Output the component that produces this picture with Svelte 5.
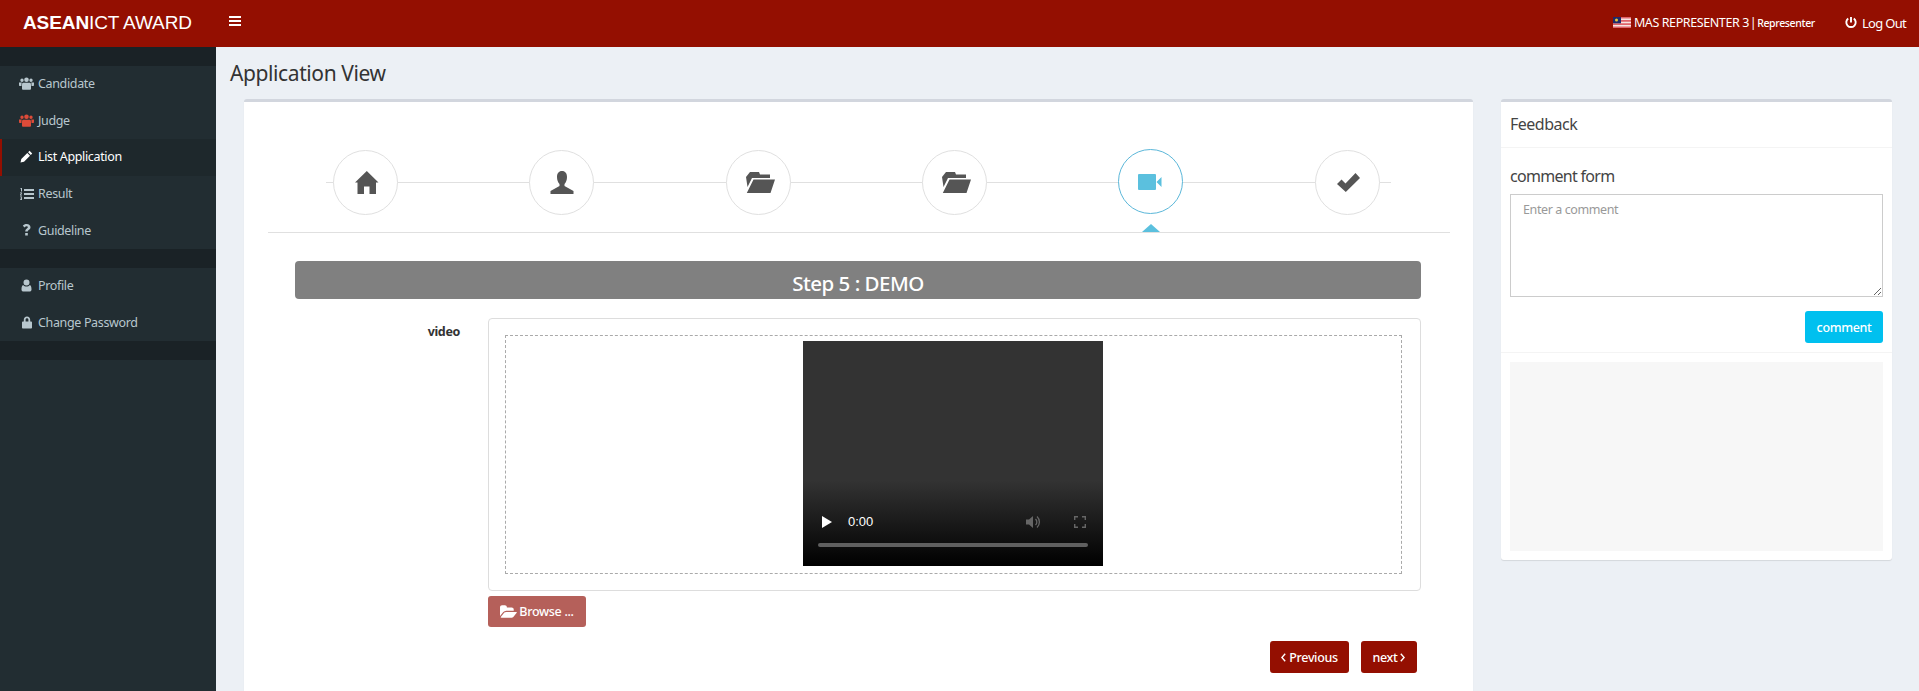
<script>
  const nav1 = [
    { label: 'Candidate', icon: 'users', color: '#b8c7ce' },
    { label: 'Judge', icon: 'users', color: '#dd4b39' },
    { label: 'List Application', icon: 'pencil', color: '#fff', active: true },
    { label: 'Result', icon: 'list', color: '#b8c7ce' },
    { label: 'Guideline', icon: 'question', color: '#b8c7ce' }
  ];
  const nav2 = [
    { label: 'Profile', icon: 'user', color: '#b8c7ce' },
    { label: 'Change Password', icon: 'lock', color: '#b8c7ce' }
  ];
  const folder = 'M2 2.500 4 0h9l1 2.500h10V6H6L1.500 15 0 5zM7.500 7.500H29L24.500 21H.8z';
  const steps = [
    { id: 'home', d: 'M11.800 0 23.500 11.500H21V23h-6.500v-7.500H9V23H2.500V11.500H0z', x: -2, w: 26, h: 23 },
    { id: 'person', d: 'M12 0c3.300 0 5 2.500 5 6 0 3-1 5.500-2.500 7v2l9 5v3H.5v-3l9-5v-2C8 11.500 7 9 7 6c0-3.500 1.700-6 5-6z', x: 0, w: 24, h: 23 },
    { id: 'open', d: folder, x: -4, w: 33, h: 21 },
    { id: 'open2', d: folder, x: -4, w: 33, h: 21 },
    { id: 'video', d: 'M1 0h16a1 1 0 0 1 1 1v14a1 1 0 0 1-1 1H1a1 1 0 0 1-1-1V1a1 1 0 0 1 1-1zM18.500 8l5-5v10z', x: 0, w: 24, h: 16, active: true },
    { id: 'check', d: 'M0 11l4.500-4.500 4 4L18.500 0 23 5 8.800 19z', x: -2, w: 25, h: 19 }
  ];
</script>

{#snippet sideIcon(name)}
  {#if name === 'users'}
    <svg class="sicon" viewBox="0 0 15 13" width="15" height="13" aria-hidden="true"><path d="M3 1.500a1.700 1.700 0 1 1 0 3.400 1.700 1.700 0 0 1 0-3.400zM12 1.500a1.700 1.700 0 1 1 0 3.400 1.700 1.700 0 0 1 0-3.400zM7.500.5a2.300 2.300 0 1 1 0 4.600 2.300 2.300 0 0 1 0-4.600zM0 5.500h2.800c-.3 1-.3 2-.3 3.500H.5C0 9 0 8 0 5.500zM15 5.500h-2.800c.3 1 .3 2 .3 3.500h2c.5 0 .5-1 .5-3.500zM4 5.800h7c.8 0 1 1 1 3v3c0 .500-.5 1-1 1H4c-.5 0-1-.5-1-1v-3c0-2 .2-3 1-3z"/></svg>
  {:else if name === 'pencil'}
    <svg class="sicon" viewBox="0 0 13 13" width="13" height="13" aria-hidden="true"><path d="M9.500.8l2.700 2.700-1.400 1.400L8.100 2.200zM7.300 3l2.700 2.700-6 6L.5 12.500l.8-3.500z"/></svg>
  {:else if name === 'list'}
    <svg class="sicon" viewBox="0 0 14 12" width="14" height="12" aria-hidden="true"><path d="M4 1h10v2H4zM4 5h10v2H4zM4 9h10v2H4zM.5 0h1.500v3.500H1V1H.5zM0 4.500h2v.8L1 6.800h1v.7H0v-.7l1.200-1.600H0zM0 8.500h2v3.500H0v-.7h1.200v-.7H.5v-.6h.7v-.8H0z"/></svg>
  {:else if name === 'question'}
    <svg class="sicon" viewBox="0 0 9 13" width="9" height="13" aria-hidden="true"><path d="M4.700 0C7 0 8.500 1.300 8.500 3.300c0 1.500-.9 2.200-1.800 2.800-.7.500-1 .8-1 1.500H3.200c0-1.500.5-2.200 1.400-2.900.7-.5 1.200-.8 1.200-1.400 0-.6-.5-1-1.200-1-.8 0-1.400.4-2 1.200L.8 1.800C1.700.6 3 0 4.700 0zM3.200 9h2.600v2.500H3.200z"/></svg>
  {:else if name === 'user'}
    <svg class="sicon" viewBox="0 0 11 13" width="11" height="13" aria-hidden="true"><path d="M5.500.5a3 3 0 1 1 0 6 3 3 0 0 1 0-6zM2.200 6c.8 1 2 1.500 3.300 1.500S8 7 8.800 6C10 6.200 10.500 8 10.500 10.500c0 1.400-.9 2-2 2h-6c-1.100 0-2-.6-2-2C.5 8 1 6.200 2.200 6z"/></svg>
  {:else}
    <svg class="sicon" viewBox="0 0 10 13" width="10" height="13" aria-hidden="true"><path d="M5 .5c2 0 3.200 1.400 3.200 3.200V5.500h.8c.5 0 1 .4 1 1v5c0 .6-.5 1-1 1H1c-.5 0-1-.4-1-1v-5c0-.6.5-1 1-1h.8V3.700C1.800 1.900 3 .5 5 .5zm0 1.800c-.8 0-1.400.6-1.400 1.400v1.800h2.800V3.700c0-.8-.6-1.400-1.400-1.400z"/></svg>
  {/if}
{/snippet}

<div class="page">
  <header class="topbar">
    <div class="brand"><b>ASEAN</b>ICT AWARD</div>
    <button class="burger" aria-label="Toggle navigation"><span></span><span></span><span></span></button>
    <div class="topright">
      <svg class="flag" viewBox="0 0 18 11" width="18" height="11" aria-hidden="true">
        <rect width="18" height="11" fill="#f6e4e2"/>
        <path d="M0 0h18v1.600H0zM0 3.100h18v1.600H0zM0 6.300h18v1.600H0zM0 9.400h18V11H0z" fill="#e0636a"/>
        <rect width="8" height="6.300" fill="#1f2a6b"/>
        <circle cx="3.500" cy="3.100" r="1.500" fill="#e9c93a"/>
      </svg>
      <span class="uname">MAS REPRESENTER 3 <span class="sep">|</span> <small>Representer</small></span>
      <span class="logout">
        <svg viewBox="0 0 12 13" width="12" height="13" aria-hidden="true"><path d="M6 6.500V1M3.200 2.600a4.700 4.700 0 1 0 5.600 0" fill="none" stroke="#fff" stroke-width="1.900"/></svg>
        Log Out
      </span>
    </div>
  </header>
  <div class="body">
    <aside class="sidebar">
      <div class="band"></div>
      <ul>
        {#each nav1 as n}
          <li class:active={n.active}>
            <span class="ic" style="fill:{n.color}">{@render sideIcon(n.icon)}</span>{n.label}
          </li>
        {/each}
      </ul>
      <div class="band"></div>
      <ul>
        {#each nav2 as n}
          <li><span class="ic" style="fill:{n.color}">{@render sideIcon(n.icon)}</span>{n.label}</li>
        {/each}
      </ul>
      <div class="band"></div>
    </aside>
    <main class="main">
      <h1>Application View</h1>
      <div class="columns">
        <section class="box wizard">
          <div class="steps">
            <div class="stepline"></div>
            {#each steps as s}
              <div class="step" class:on={s.active}>
                <svg viewBox="{s.x} 0 {s.w} {s.h}" width={s.w} height={s.h} aria-hidden="true"><path d={s.d} /></svg>
              </div>
            {/each}
          </div>
          <div class="rule"><i></i></div>
          <div class="formwrap">
            <div class="stephead">Step 5 : DEMO</div>
            <div class="fieldrow">
              <div class="fieldlabel">video</div>
              <div class="fieldcol">
                <div class="preview">
                  <div class="dash">
                    <div class="player">
                      <div class="controls">
                        <svg class="play" viewBox="0 0 10 12" width="10" height="12" aria-hidden="true"><path d="M0 0l10 6-10 6z" fill="#fff"/></svg>
                        <span class="time">0:00</span>
                        <svg class="vol" viewBox="0 0 16 14" width="16" height="14" aria-hidden="true"><path d="M0 4.500h3L7 1v12L3 9.500H0z" fill="#666"/><path d="M9.500 4a4 4 0 0 1 0 6M11 1.500a7.500 7.500 0 0 1 0 11" fill="none" stroke="#666" stroke-width="1.300"/></svg>
                        <svg class="full" viewBox="0 0 12 12" width="12" height="12" aria-hidden="true"><path d="M.7 4V.7H4M8 .7h3.300V4M11.300 8v3.300H8M4 11.300H.7V8" fill="none" stroke="#666" stroke-width="1.400"/></svg>
                      </div>
                      <div class="track"></div>
                    </div>
                  </div>
                </div>
                <div class="browse">
                  <svg viewBox="0 0 1900 1792" width="17" height="16" aria-hidden="true"><path fill="#fff" d="M1879 952q0 31-31 66l-336 396q-43 51-120.500 86.500t-143.500 35.500h-1088q-34 0-60.500-13t-26.500-43q0-31 31-66l336-396q43-51 120.500-86.500t143.500-35.500h1088q34 0 60.500 13t26.500 43zm-343-344v160h-832q-94 0-197 47.500t-164 119.500l-337 396-5 6q0-4-.5-12.500t-.5-12.500v-960q0-92 66-158t158-66h320q92 0 158 66t66 158v32h544q92 0 158 66t66 158z"/></svg>
                  Browse ...
                </div>
              </div>
            </div>
            <div class="pager">
              <span class="btn prev">
                <svg viewBox="0 0 5 9" width="5" height="9" aria-hidden="true"><path d="M4.200.8.9 4.500l3.300 3.700" fill="none" stroke="#fff" stroke-width="1.400"/></svg>
                Previous
              </span>
              <span class="btn next">
                next
                <svg viewBox="0 0 5 9" width="5" height="9" aria-hidden="true"><path d="M.8.8l3.300 3.700L.8 8.200" fill="none" stroke="#fff" stroke-width="1.400"/></svg>
              </span>
            </div>
          </div>
        </section>
        <section class="box feedback">
          <div class="fbhead">Feedback</div>
          <div class="fbform">
            <div class="fbtitle">comment form</div>
            <textarea placeholder="Enter a comment"></textarea>
            <div class="fbactions"><span class="cbtn">comment</span></div>
          </div>
          <div class="fbfoot"><div class="well"></div></div>
        </section>
      </div>
    </main>
  </div>
</div>

<style>
  :global(body) { margin: 0; overflow: hidden; }
  .page { width: 1919px; height: 691px; overflow: hidden; font-family: "Noto Sans", "Open Sans", sans-serif; font-size: 13px; color: #333; background: #ecf0f5; }
  .topbar { height: 47px; background: #940f01; color: #fff; display: flex; align-items: center; }
  .brand { width: 191px; padding: 0 0 2px 23px; font: 19px "Liberation Sans", sans-serif; letter-spacing: -.1px; white-space: nowrap; }
  .brand b { font-weight: 700; }
  .burger { margin-left: 15px; width: 12px; height: 10px; padding: 0; border: 0; background: none; display: flex; flex-direction: column; justify-content: space-between; margin-bottom: 6px; }
  .burger span { display: block; height: 2px; background: #fff; }
  .topright { margin-left: auto; display: flex; align-items: center; padding: 0 13px 2px 0; }
  .flag { margin-right: 3px; }
  .uname { font-size: 12.500px; letter-spacing: -.4px; white-space: nowrap; }
  .sep { margin: 0 -2px; }
  .uname small { font-size: 10.500px; letter-spacing: -.35px; font-weight: 500; }
  .logout { margin-left: 30px; display: flex; align-items: center; gap: 5px; font-size: 13px; letter-spacing: -.7px; white-space: nowrap; }
  .body { display: flex; height: 644px; }
  .sidebar { width: 216px; flex: none; background: #222d32; }
  .band { height: 19px; background: #1a2226; }
  ul { list-style: none; margin: 0; padding: 0; }
  li { height: 36.600px; display: flex; align-items: center; padding: 0 0 1px 15px; color: #b8c7ce; font-size: 12.500px; letter-spacing: -.35px; box-sizing: border-box; }
  li.active { background: #1e282c; color: #fff; border-left: 2px solid #940f01; padding-left: 13px; }
  .ic { width: 23px; display: flex; justify-content: center; flex: none; }
  .sicon { display: block; }
  .main { flex: 1; min-width: 0; padding-left: 14px; }
  h1 { margin: 0; font-size: 21px; font-weight: 400; letter-spacing: -.4px; height: 52px; line-height: 52px; color: #333; }
  .columns { display: flex; align-items: flex-start; margin-left: 14px; gap: 28px; }
  .box { background: #fff; border-top: 3px solid #d2d6de; border-radius: 3px; box-shadow: 0 1px 1px rgba(0,0,0,.1); box-sizing: border-box; }
  .wizard { width: 1229px; height: 600px; padding: 0 24px; flex: none; }
  .steps { position: relative; display: flex; justify-content: space-between; padding: 48px 0 17px 65px; width: 1047px; height: 65px; }
  .stepline { position: absolute; left: 58px; width: 1065px; top: 80px; height: 1px; background: #e0e0e0; }
  .step { position: relative; width: 63px; height: 63px; border-radius: 50%; border: 1px solid #e0e0e0; background: #fff; display: flex; align-items: center; justify-content: center; fill: #555; }
  .step.on { border-color: #5bb7d9; fill: #5bc0de; transform: translate(-1px, -1px); }
  .rule { position: relative; height: 1px; background: #e0e0e0; width: 1182px; }
  .rule i { position: absolute; left: 874px; top: -8px; border: 9.500px solid transparent; border-top: 0; border-bottom: 8px solid #5bc0de; }
  .formwrap { padding: 28px 27px 0; width: 1126px; }
  .stephead { height: 38px; background: gray; color: #fff; text-align: center; font-size: 20.500px; font-weight: 500; line-height: 45px; border-radius: 4px; letter-spacing: -.5px; }
  .fieldrow { display: flex; margin-top: 19px; }
  .fieldlabel { width: 165px; padding: 5px 28px 0 0; text-align: right; font-weight: 700; font-size: 12.500px; letter-spacing: -.35px; }
  .fieldcol { width: 933px; flex: none; }
  .preview { border: 1px solid #ddd; border-radius: 4px; height: 273px; box-sizing: border-box; padding: 16px 18px 16px 16px; }
  .dash { border: 1px dashed #aaa; height: 239px; display: flex; justify-content: center; padding-top: 5px; box-sizing: border-box; }
  .player { width: 300px; height: 225px; margin-right: 1px; background: linear-gradient(#333 0, #333 62%, #000 100%); position: relative; }
  .controls { position: absolute; left: 19px; right: 17px; top: 173px; display: flex; align-items: center; color: #fff; }
  .time { margin-left: 16px; font: 13px "Liberation Sans", sans-serif; }
  .vol { margin-left: auto; margin-right: 32px; }
  .track { position: absolute; left: 15px; right: 15px; top: 202px; height: 4px; border-radius: 2px; background: #5f5f5f; }
  .browse { margin-top: 5px; width: 98px; height: 31px; background: #b5605a; border-radius: 3px; color: #fff; font-size: 12.500px; font-weight: 500; display: flex; align-items: center; justify-content: center; gap: 2px; letter-spacing: -.3px; }
  .pager { display: flex; justify-content: flex-end; gap: 12px; margin-top: 14px; padding-right: 4px; }
  .btn { height: 32px; box-sizing: border-box; background: #940f01; color: #fff; border-radius: 3px; font-size: 12.500px; font-weight: 500; display: flex; align-items: center; justify-content: center; gap: 3px; letter-spacing: -.35px; }
  .prev { width: 79px; }
  .next { width: 56px; }
  .feedback { width: 391px; flex: none; }
  .fbhead { height: 46px; box-sizing: border-box; padding: 0 9px; font-size: 16px; line-height: 44px; letter-spacing: -.5px; color: #444; border-bottom: 1px solid #f4f4f4; }
  .fbform { padding: 18px 9px 0; border-bottom: 1px solid #f4f4f4; height: 205px; box-sizing: border-box; }
  .fbtitle { font-size: 16px; height: 20px; line-height: 20px; margin: 0 0 8px; letter-spacing: -.7px; color: #444; }
  textarea { display: block; width: 373px; height: 103px; box-sizing: border-box; border: 1px solid #ccc; padding: 6px 12px; margin: 0; font: 12.500px "Noto Sans", sans-serif; letter-spacing: -.4px; border-radius: 0; outline: none; }
  textarea::placeholder { color: #999; opacity: 1; }
  .fbactions { display: flex; justify-content: flex-end; margin-top: 14px; }
  .cbtn { width: 78px; height: 32px; background: #00c0ef; color: #fff; border-radius: 3px; font-size: 12.500px; font-weight: 500; display: flex; align-items: center; justify-content: center; letter-spacing: -.35px; }
  .fbfoot { padding: 9px; }
  .well { height: 189px; background: #f7f7f7; }
</style>
